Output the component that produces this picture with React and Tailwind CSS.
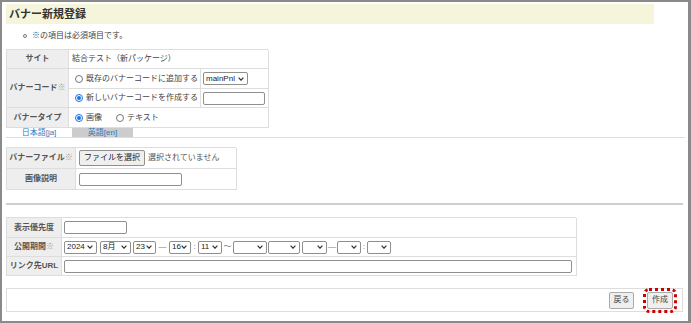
import React from "react";

const Chevron = () => (
    <svg width="6" height="4" viewBox="0 0 6 4" className="shrink-0">
        <path d="M0.6 0.6 L3 3.2 L5.4 0.6" fill="none" stroke="#333" strokeWidth="1.2" />
    </svg>
);

const Select = ({ w, value = "", className = "" }) => (
    <span
        className={`flex h-[13px] shrink-0 items-center justify-between rounded-[2px] border border-[#8f8f8f] bg-white pl-[2px] pr-[3px] text-[8px] leading-none text-[#222] ${w} ${className}`}
    >
        <span>{value}</span>
        <Chevron />
    </span>
);

const Input = ({ w }) => (
    <span className={`block h-[13px] shrink-0 rounded-[2px] border border-[#8f8f8f] bg-white ${w}`} />
);

const Radio = ({ checked, className = "" }) =>
    checked ? (
        <span
            className={`flex h-[8px] w-[8px] shrink-0 items-center justify-center rounded-full border border-[#1a73e8] bg-white ${className}`}
        >
            <span className="h-[4px] w-[4px] rounded-full bg-[#1a73e8]" />
        </span>
    ) : (
        <span className={`block h-[8px] w-[8px] shrink-0 rounded-full border border-[#767676] bg-white ${className}`} />
    );

const Label = ({ children, mark, className = "" }) => (
    <div
        className={`flex items-center justify-center border-r border-b border-[#dddddd] bg-[#eeeeee] text-[8px] font-bold text-[#555] ${className}`}
    >
        {children}
        {mark && <span className="font-normal text-[#999]">※</span>}
    </div>
);

const Cell = ({ children, className = "" }) => (
    <div className={`flex items-center border-r border-b border-[#dddddd] text-[8px] text-[#444] ${className}`}>
        {children}
    </div>
);

const Sep = ({ children, className = "" }) => (
    <span className={`shrink-0 text-center text-[8px] text-[#777] ${className}`}>{children}</span>
);

export default function App() {
    return (
        <div
            className="h-[323px] w-[691px] overflow-hidden border-2 border-r-[3px] border-[#8a8a8a] bg-white pt-[2px] pl-[4px]"
            style={{ fontFamily: '"Liberation Sans", "Noto Sans CJK JP", sans-serif' }}
        >
            <div className="h-[20px] w-[648px] bg-[#f5f5dc] pl-[3px] text-[11px] font-bold leading-[20px] text-[#333]">
                バナー新規登録
            </div>

            <div className="mt-[7px] flex h-[10px] items-center pl-[17px] text-[8px] text-[#444]">
                <span className="mr-[5px] h-[4px] w-[4px] rounded-full border border-[#777]" />
                ※の項目は必須項目です。
            </div>

            <div className="mt-[8px] grid w-[262px] grid-cols-[62px_132px_68px] grid-rows-[19px_20px_19px_20px] border-t border-l border-[#dddddd]">
                <Label>サイト</Label>
                <Cell className="col-span-2 pl-[3px]">結合テスト（新パッケージ）</Cell>

                <Label mark className="row-span-2">
                    バナーコード
                </Label>
                <Cell className="gap-[3px] pl-[6px]">
                    <Radio />
                    既存のバナーコードに追加する
                </Cell>
                <Cell className="pl-[2px]">
                    <Select w="w-[45px]" value="mainPnl" />
                </Cell>
                <Cell className="gap-[3px] pl-[6px]">
                    <Radio checked />
                    新しいバナーコードを作成する
                </Cell>
                <Cell className="pl-[2px]">
                    <Input w="w-[62px]" />
                </Cell>

                <Label>バナータイプ</Label>
                <Cell className="col-span-2 pl-[6px]">
                    <Radio checked />
                    <span className="ml-[3px]">画像</span>
                    <Radio className="ml-[14px]" />
                    <span className="ml-[3px]">テキスト</span>
                </Cell>
            </div>

            <div className="flex h-[10px] w-[679px] border-b border-[#dddddd] text-[8px] leading-[10px] text-[#2f7bbf]">
                <div className="w-[66px] bg-white text-center">日本語[ja]</div>
                <div className="w-[61px] bg-[#cccccc] text-center">英語[en]</div>
            </div>

            <div className="mt-[9px] grid w-[230px] grid-cols-[69px_161px] grid-rows-[21px_21px] border-t border-l border-[#dddddd]">
                <Label mark>バナーファイル</Label>
                <Cell className="pl-[3px]">
                    <span className="flex h-[16px] w-[66px] items-center justify-center rounded-[2px] border border-[#8f8f8f] bg-[#efefef] text-[8px] text-[#222]">
                        ファイルを選択
                    </span>
                    <span className="ml-[3px] text-[#555]">選択されていません</span>
                </Cell>
                <Label>画像説明</Label>
                <Cell className="pl-[3px]">
                    <Input w="w-[103px]" />
                </Cell>
            </div>

            <div className="mt-[13px] w-[677px] border-t-2 border-[#cfcfcf]" />

            <div className="mt-[12px] grid w-[570px] grid-cols-[55px_515px] grid-rows-[20px_19px_19px] border-t border-l border-[#dddddd]">
                <Label>表示優先度</Label>
                <Cell className="pl-[2px]">
                    <Input w="w-[63px]" />
                </Cell>

                <Label mark>公開期間</Label>
                <Cell className="pl-[2px]">
                    <Select w="w-[33px]" value="2024" />
                    <Select w="w-[31px]" value="8月" className="ml-[3px]" />
                    <Select w="w-[23px]" value="23" className="ml-[2px]" />
                    <Sep className="w-[13px]">—</Sep>
                    <Select w="w-[22px]" value="16" />
                    <Sep className="w-[7px]">:</Sep>
                    <Select w="w-[24px]" value="11" />
                    <Sep className="w-[11px]">〜</Sep>
                    <Select w="w-[34px]" />
                    <Select w="w-[32px]" className="ml-[1px]" />
                    <Select w="w-[25px]" className="ml-[2px]" />
                    <Sep className="w-[10px]">—</Sep>
                    <Select w="w-[24px]" />
                    <Sep className="w-[6px]">:</Sep>
                    <Select w="w-[24px]" />
                </Cell>

                <Label>リンク先URL</Label>
                <Cell className="pl-[2px]">
                    <Input w="w-[508px]" />
                </Cell>
            </div>

            <div className="mt-[12px] flex h-[24px] w-[677px] items-center justify-end gap-[13px] border border-[#dddddd] pr-[9px]">
                <span className="flex h-[17px] w-[25px] items-center justify-center rounded-[2px] border border-[#aaaaaa] bg-[#efefef] text-[8px] text-[#444]">
                    戻る
                </span>
                <span className="flex h-[17px] w-[26px] items-center justify-center rounded-[2px] border border-[#aaaaaa] bg-[#efefef] text-[8px] text-[#444] outline-[3px] outline-offset-[1px] outline-dotted outline-[#cc0000]">
                    作成
                </span>
            </div>
        </div>
    );
}
